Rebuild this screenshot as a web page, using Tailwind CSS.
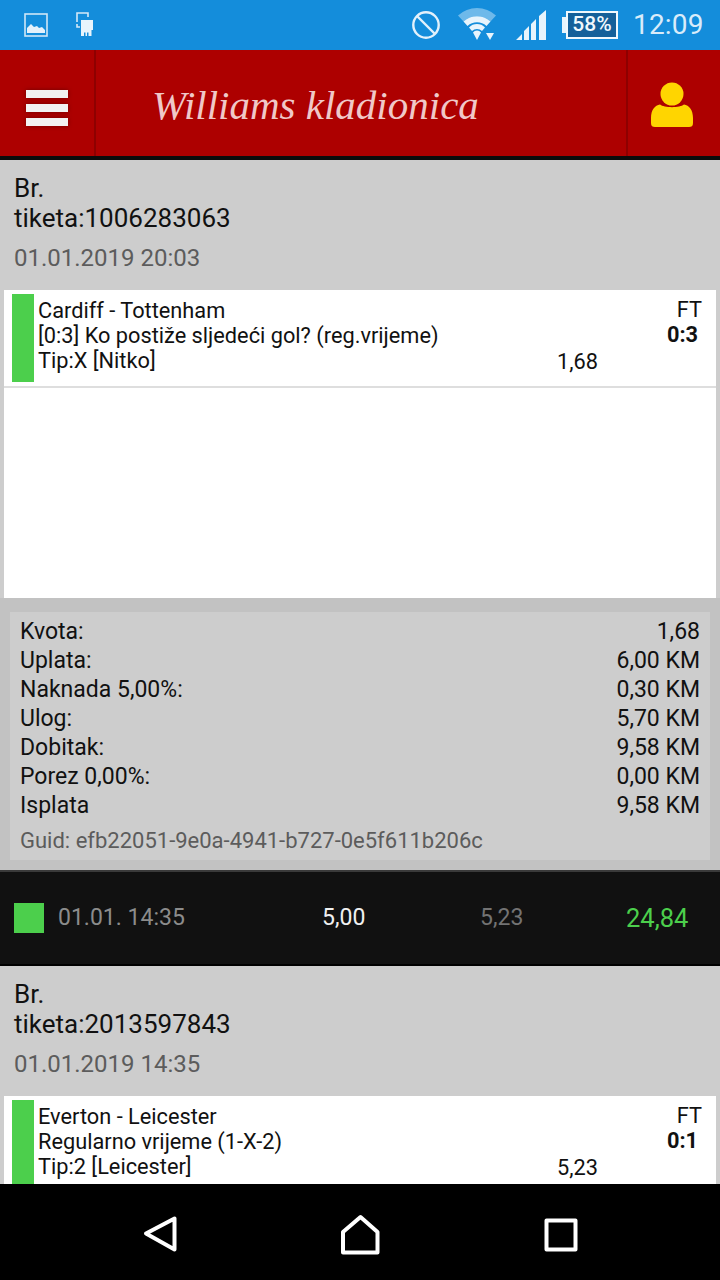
<!DOCTYPE html>
<html lang="en">
<head>
    <meta charset="UTF-8">
    <meta name="viewport" content="width=device-width, initial-scale=1.0">
    <title>Williams kladionica</title>
    <script src="https://cdn.jsdelivr.net/npm/@tailwindcss/browser@4"></script>
</head>
<body class="bg-[#cdcdcd] font-['Roboto',sans-serif] text-[#111]">
<div class="w-[720px] h-[1280px] flex flex-col overflow-hidden">
    <!-- Status bar -->
    <div class="h-[50px] shrink-0 bg-[#148ddb] flex items-center text-[#e3f1fb]">
        <svg class="ml-[24px]" width="24" height="24" viewBox="0 0 24 24"><rect x="1" y="1" width="22" height="22" fill="none" stroke="#cfe6f7" stroke-width="1.6"/><path d="M3 20V15L7 11L10 14L13 13L15 15L18 14L21 17V20Z" fill="#e3f1fb"/></svg>
        <svg class="ml-[28px]" width="18" height="26" viewBox="0 0 18 26"><path d="M1 10V1H12V5" fill="none" stroke="#d5e9f8" stroke-width="1.6"/><path d="M1 12V15H4" fill="none" stroke="#d5e9f8" stroke-width="1.6"/><path d="M5 8H17V18H15.500V24H5Z" fill="#e8f4fc"/><path d="M8 20.500H9.500V24H8ZM11 20.500H12.500V24H11Z" fill="#148ddb"/></svg>
        <svg class="ml-[317px]" width="30" height="30" viewBox="0 0 30 30"><circle cx="15" cy="15" r="12.700" fill="none" stroke="#e3f1fb" stroke-width="2.400"/><path d="M6 6L24 24" stroke="#e3f1fb" stroke-width="2.400"/></svg>
        <svg class="ml-[16px]" width="40" height="34" viewBox="0 0 40 34"><path d="M1 7.500A28 28 0 0 1 39 7.500L33.500 13.500A20 20 0 0 0 6.500 13.500Z" fill="#6eb9ea"/><path d="M6.500 13.500A20 20 0 0 1 33.500 13.500L29.500 18A14 14 0 0 0 10.500 18Z" fill="#e8f4fc"/><path d="M12 19.500A11 11 0 0 1 28 19.500L25 23A7 7 0 0 0 15 23Z" fill="#e8f4fc"/><path d="M16 24.500A5 5 0 0 1 24 24.500L20 32Z" fill="#e8f4fc"/><path d="M29 25H37L33 32Z" fill="#e8f4fc"/></svg>
        <svg class="ml-[19px]" width="31" height="31" viewBox="0 0 31 31"><path d="M0 30L6 24V30ZM8 30V21L13 16V30ZM15 30V14L20 9V30ZM23 30V6L30 0V30Z" fill="#e8f4fc"/></svg>
        <div class="ml-[15px] flex items-center">
            <div class="w-[5px] h-[16px] bg-[#e8f4fc]"></div>
            <div class="-ml-[1px] w-[52px] h-[28px] border-2 border-[#f0f8fd] bg-[#14609a] flex items-center justify-center text-[21px] font-medium text-[#f0f8fd]">58%</div>
        </div>
        <div class="ml-[15px] text-[28px] text-[#d9ecfa] leading-none tracking-[0.2px]">12:09</div>
    </div>

    <!-- App header -->
    <div class="h-[110px] shrink-0 bg-[#ad0000] border-b-4 border-[#0c0c0c] flex">
        <div class="w-[96px] border-r-2 border-[#8e0000] pt-[10px] flex flex-col items-center justify-center gap-[6px]">
            <div class="w-[42px] h-[8px] bg-[#f2f2f2] shadow-[0_0_4px_#6e0000]"></div>
            <div class="w-[42px] h-[8px] bg-[#f2f2f2] shadow-[0_0_4px_#6e0000]"></div>
            <div class="w-[42px] h-[8px] bg-[#f2f2f2] shadow-[0_0_4px_#6e0000]"></div>
        </div>
        <div class="flex-1 pl-[56px] pt-[25px] font-['Liberation_Serif',serif] italic text-[41px] leading-[60px] text-[#f0c8c8] whitespace-nowrap">Williams kladionica</div>
        <div class="w-[94px] border-l-2 border-[#8e0000] flex items-center justify-center pr-[5px] pt-[4px]">
            <svg width="44" height="46" viewBox="0 0 44 46"><circle cx="22" cy="12" r="11.500" fill="#ffd500"/><path d="M10 22.500C14 26 30 26 34 22.500C39 23 43 28 43 36V41C43 44 41.500 45 39 45H5C2.500 45 1 44 1 41V36C1 28 5 23 10 22.500Z" fill="#ffd500"/></svg>
        </div>
    </div>

    <div class="flex-1 min-h-0 overflow-hidden">
        <!-- Ticket 1 -->
        <div class="pl-[14px] pt-[13px] h-[130px] text-[26px] leading-[30px]">
            <div>Br.</div>
            <div>tiketa:1006283063</div>
            <div class="mt-[10px] text-[24px] text-[#5c5c5c]">01.01.2019 20:03</div>
        </div>
        <div class="mx-[4px] h-[308px] bg-white">
            <div class="h-[98px] border-b-2 border-[#dedede] pl-[8px] pr-[14px] pt-[4px] flex">
                <div class="w-[22px] h-[88px] bg-[#4ccf4c]"></div>
                <div class="relative flex-1 pl-[4px] text-[21.750px] leading-[25px] pt-[4px] whitespace-nowrap">
                    <div>Cardiff - Tottenham</div>
                    <div>[0:3] Ko postiže sljedeći gol? (reg.vrijeme)</div>
                    <div>Tip:X [Nitko]</div>
                    <div class="absolute right-[104px] top-[55px] leading-[25px]">1,68</div>
                    <div class="absolute right-0 top-[3px] text-right leading-[25px]">FT<div class="font-bold pr-[4px]">0:3</div></div>
                </div>
            </div>
        </div>

        <!-- Summary -->
        <div class="h-[272px] bg-[#c2c2c2] px-[10px] pt-[14px]">
            <div class="h-[248px] bg-[#cdcdcd] pl-[10px] pr-[10px] pt-[5px] text-[23px] leading-[29px]">
                <div class="flex justify-between"><span>Kvota:</span><span>1,68</span></div>
                <div class="flex justify-between"><span>Uplata:</span><span>6,00 KM</span></div>
                <div class="flex justify-between"><span>Naknada 5,00%:</span><span>0,30 KM</span></div>
                <div class="flex justify-between"><span>Ulog:</span><span>5,70 KM</span></div>
                <div class="flex justify-between"><span>Dobitak:</span><span>9,58 KM</span></div>
                <div class="flex justify-between"><span>Porez 0,00%:</span><span>0,00 KM</span></div>
                <div class="flex justify-between"><span>Isplata</span><span>9,58 KM</span></div>
                <div class="mt-[6px] text-[22px] text-[#5c5c5c]">Guid: efb22051-9e0a-4941-b727-0e5f611b206c</div>
            </div>
        </div>

        <!-- Dark history row -->
        <div class="h-[96px] bg-[#111111] border-t-2 border-b-2 border-t-[#3a3a3a] border-b-black flex items-center pl-[14px] text-[23px]">
            <div class="w-[30px] h-[30px] bg-[#4ccf4c]"></div>
            <div class="ml-[14px] w-[264px] text-[#8c8c8c]">01.01. 14:35</div>
            <div class="w-[158px] text-[#f0f0f0]">5,00</div>
            <div class="w-[146px] text-[#737373]">5,23</div>
            <div class="text-[#4ccf4c] text-[25.500px]">24,84</div>
        </div>

        <!-- Ticket 2 -->
        <div class="pl-[14px] pt-[13px] h-[130px] text-[26px] leading-[30px]">
            <div>Br.</div>
            <div>tiketa:2013597843</div>
            <div class="mt-[10px] text-[24px] text-[#5c5c5c]">01.01.2019 14:35</div>
        </div>
        <div class="mx-[4px] h-[98px] bg-white pl-[8px] pr-[14px] pt-[4px] flex">
            <div class="w-[22px] h-[88px] bg-[#4ccf4c]"></div>
            <div class="relative flex-1 pl-[4px] text-[21.750px] leading-[25px] pt-[4px] whitespace-nowrap">
                <div>Everton - Leicester</div>
                <div>Regularno vrijeme (1-X-2)</div>
                <div>Tip:2 [Leicester]</div>
                <div class="absolute right-[104px] top-[55px] leading-[25px]">5,23</div>
                <div class="absolute right-0 top-[3px] text-right leading-[25px]">FT<div class="font-bold pr-[4px]">0:1</div></div>
            </div>
        </div>
    </div>

    <!-- Android nav bar -->
    <div class="h-[96px] shrink-0 bg-black relative">
        <svg class="absolute left-[140px] top-[30px]" width="40" height="40" viewBox="0 0 40 40"><path d="M34.500 4.500V35.500L6 19.500Z" fill="none" stroke="white" stroke-width="4" stroke-linejoin="round"/></svg>
        <svg class="absolute left-[338px] top-[29px]" width="44" height="44" viewBox="0 0 44 44"><path d="M5 39.500V19L22.500 4L39.500 19V39.500Z" fill="none" stroke="white" stroke-width="4" stroke-linejoin="round"/></svg>
        <svg class="absolute left-[543px] top-[33px]" width="36" height="36" viewBox="0 0 36 36"><rect x="3.500" y="3.500" width="29" height="29" fill="none" stroke="white" stroke-width="4" stroke-linejoin="round"/></svg>
    </div>
</div>
</body>
</html>
